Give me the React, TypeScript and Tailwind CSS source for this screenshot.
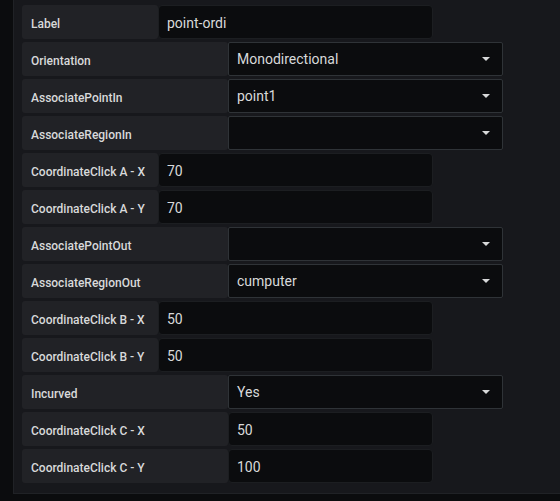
import React from "react";

type Row = {
  label: string;
  value: string;
  wide: boolean;
  select: boolean;
};

const rows: Row[] = [
  { label: "Label", value: "point-ordi", wide: false, select: false },
  { label: "Orientation", value: "Monodirectional", wide: true, select: true },
  { label: "AssociatePointIn", value: "point1", wide: true, select: true },
  { label: "AssociateRegionIn", value: "", wide: true, select: true },
  { label: "CoordinateClick A - X", value: "70", wide: false, select: false },
  { label: "CoordinateClick A - Y", value: "70", wide: false, select: false },
  { label: "AssociatePointOut", value: "", wide: true, select: true },
  { label: "AssociateRegionOut", value: "cumputer", wide: true, select: true },
  { label: "CoordinateClick B - X", value: "50", wide: false, select: false },
  { label: "CoordinateClick B - Y", value: "50", wide: false, select: false },
  { label: "Incurved", value: "Yes", wide: true, select: true },
  { label: "CoordinateClick C - X", value: "50", wide: true, select: false },
  { label: "CoordinateClick C - Y", value: "100", wide: true, select: false },
];

function Caret() {
  return (
    <svg width="10" height="6" viewBox="0 0 10 6" className="shrink-0">
      <path d="M1 1h8L5 5z" fill="#d8d9da" />
    </svg>
  );
}

function FormRow({ row }: { row: Row }) {
  return (
    <div className="flex h-[34px]">
      <div
        className={
          (row.wide ? "w-[206px]" : "w-[136px]") +
          " flex items-center rounded-[3px] bg-[#212226] pl-[9px] pt-[4px] text-[12px] font-medium text-[#d8d9da]"
        }
      >
        {row.label}
      </div>
      {row.select ? (
        <div className="flex w-[275px] items-center justify-between rounded-[2px] border border-[#2f3337] bg-[#0b0c0e] pl-[8px] pr-[11px] text-[14px] text-[#d8d9da]">
          <span className="pt-[1px]">{row.value}</span>
          <Caret />
        </div>
      ) : (
        <div
          className={
            (row.wide ? "w-[205px]" : "w-[275px]") +
            " flex items-center rounded-[4px] border border-[#1c1e21] bg-[#0b0c0e] pl-[8px] pt-[2px] text-[14px] text-[#d8d9da]"
          }
        >
          {row.value}
        </div>
      )}
    </div>
  );
}

export default function App() {
  return (
    <div
      className="h-[501px] w-[560px] overflow-hidden bg-[#0b0c0e] pl-[13px]"
      style={{ fontFamily: "Roboto, 'Liberation Sans', sans-serif" }}
    >
      <div className="h-[494px] border-b border-l border-[#202226] bg-[#17181c] pl-[8px] pt-[5px]">
        <div className="flex flex-col gap-[3px]">
          {rows.map((r) => (
            <FormRow key={r.label} row={r} />
          ))}
        </div>
      </div>
    </div>
  );
}
